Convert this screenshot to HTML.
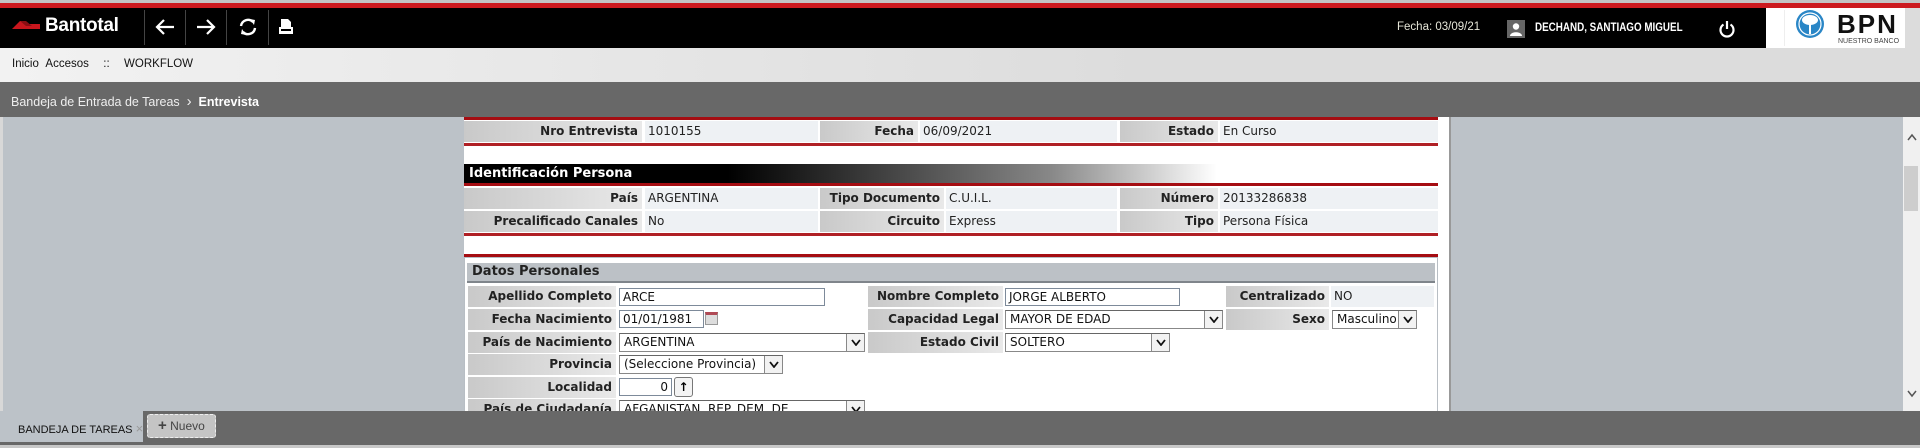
<!DOCTYPE html>
<html><head><meta charset="utf-8"><style>
*{margin:0;padding:0;box-sizing:border-box}
body{width:1920px;height:448px;position:relative;overflow:hidden;background:#bcc2c8;font-family:"Liberation Sans",sans-serif}
.a{position:absolute}
.lb{position:absolute;background:linear-gradient(90deg,#c9c9c9,#e9e9e9);font:bold 12px "DejaVu Sans",sans-serif;color:#222;text-align:right;padding-right:4px;line-height:21px;white-space:nowrap}
.vl{position:absolute;background:#eef1f4;font:12px "DejaVu Sans",sans-serif;color:#222;padding-left:3px;line-height:21px;white-space:nowrap}
.rl{position:absolute;left:464px;width:974px;background:#a50d12}
.in{position:absolute;background:#fff;border:1px solid #7d8a9a;font:12px "DejaVu Sans",sans-serif;color:#111;padding-left:3px;line-height:16px;height:18px;white-space:nowrap;overflow:hidden}
.sel{position:absolute;background:#fff;border:1px solid #888;border-top-color:#666;font:12px "DejaVu Sans",sans-serif;color:#111;padding-left:4px;line-height:17px;height:19px;white-space:nowrap;overflow:hidden}
.sel b{position:absolute;right:0;top:0;width:18px;height:17px;border-left:1px solid #888;background:#f2f2f2}
.sel b svg{position:absolute;left:4px;top:5px}
.sep{position:absolute;top:10px;width:1px;height:35px;background:#444}
</style></head><body>
<div class="a" style="left:0;top:0;width:1920px;height:3px;background:#c4c4c4"></div>
<div class="a" style="left:0;top:3px;width:1920px;height:5px;background:#cc1a1f"></div>
<div class="a" style="left:0;top:8px;width:1766px;height:40px;background:#000"></div>
<svg class="a" style="left:12px;top:19px" width="30" height="11"><polygon points="0,10 8,2 14,2 14,5 28,5 28,10" fill="#c8161d"/><polygon points="8,2 14,2 20,7 14,7" fill="#8a0d12"/></svg>
<div class="a" style="left:45px;top:15px;color:#fff;font:bold 19px 'Liberation Sans',sans-serif;letter-spacing:-0.3px">Bantotal</div>
<div class="sep" style="left:144px"></div><div class="sep" style="left:185px"></div><div class="sep" style="left:226px"></div><div class="sep" style="left:268px"></div>
<svg class="a" style="left:154px;top:18px" width="22" height="18"><path d="M20 9H3M10 2L3 9l7 7" stroke="#fff" stroke-width="2.2" fill="none"/></svg>
<svg class="a" style="left:195px;top:18px" width="22" height="18"><path d="M2 9h17M12 2l7 7-7 7" stroke="#fff" stroke-width="2.2" fill="none"/></svg>
<svg class="a" style="left:238px;top:18px" width="20" height="18"><path d="M3 8a7 7 0 0 1 12-4M17 10a7 7 0 0 1-12 4" stroke="#fff" stroke-width="2.4" fill="none"/><path d="M12 1l5 1-1 5zM8 17l-5-1 1-5z" fill="#fff"/></svg>
<svg class="a" style="left:278px;top:18px" width="16" height="17"><path d="M3 1h7l3 3v6H3z" fill="#fff"/><rect x="1" y="9" width="14" height="7" fill="#fff"/><rect x="3" y="11" width="10" height="2" fill="#000"/></svg>
<div class="a" style="left:1397px;top:21px;color:#e6e6d8;font:11.5px 'Liberation Sans',sans-serif">Fecha: 03/09/21</div>
<div class="a" style="left:1507px;top:20px;width:18px;height:18px;background:#666"><svg width="18" height="18"><circle cx="9" cy="6.5" r="3.2" fill="#fff"/><path d="M3 16c0-5 12-5 12 0z" fill="#fff"/></svg></div>
<div class="a" style="left:1535px;top:20px;color:#fff;font:bold 12px 'Liberation Sans',sans-serif;transform:scaleX(0.82);transform-origin:left">DECHAND, SANTIAGO MIGUEL</div>
<svg class="a" style="left:1718px;top:20px" width="18" height="18"><path d="M5.5 4.5a6.5 6.5 0 1 0 7 0" stroke="#fff" stroke-width="2.2" fill="none"/><path d="M9 1v8" stroke="#fff" stroke-width="2.2"/></svg>
<div class="a" style="left:1766px;top:8px;width:139px;height:40px;background:#fff"></div>
<div class="a" style="left:1784px;top:10px;width:1px;height:36px;background:#eee"></div>
<svg class="a" style="left:1792px;top:10px" width="38" height="30"><circle cx="18" cy="14" r="14" fill="#2a86c6"/><circle cx="18" cy="14" r="11" fill="none" stroke="#fff" stroke-width="1.2"/><ellipse cx="18" cy="10" rx="8" ry="5" fill="#fff"/><rect x="17" y="12" width="2" height="12" fill="#fff"/></svg>
<div class="a" style="left:1837px;top:9px;color:#111;font:bold 26px 'Liberation Sans',sans-serif;letter-spacing:2px">BPN</div>
<div class="a" style="left:1838px;top:38px;color:#444;font:7px 'Liberation Sans',sans-serif">NUESTRO BANCO</div>
<div class="a" style="left:1905px;top:8px;width:15px;height:40px;background:#dcdcdc"></div>
<div class="a" style="left:0;top:48px;width:1920px;height:34px;background:linear-gradient(90deg,#f2f2f2,#dcdcdc 60%)"></div>
<div class="a" style="left:12px;top:58px;color:#111;font:11.5px 'Liberation Sans',sans-serif;word-spacing:4px">Inicio Accesos &nbsp;:: &nbsp;WORKFLOW</div>
<div class="a" style="left:0;top:82px;width:1920px;height:35px;background:#686868"></div>
<div class="a" style="left:11px;top:93px;color:#eee;font:12.5px 'Liberation Sans',sans-serif">Bandeja de Entrada de Tareas &nbsp;<span style="font-size:15px">›</span>&nbsp; <b style="color:#fff">Entrevista</b></div>
<div class="a" style="left:0;top:117px;width:3px;height:295px;background:#d8d8d8"></div>
<div class="a" style="left:464px;top:117px;width:985px;height:294px;background:#fff"></div>
<div class="a" style="left:1449px;top:117px;width:2px;height:294px;background:#999"></div>
<div class="a" style="left:1903px;top:117px;width:17px;height:294px;background:#f0f0f0"></div>
<div class="a" style="left:1904px;top:166px;width:14px;height:45px;background:#cdcdcd"></div>
<svg class="a" style="left:1906px;top:132px" width="12" height="10"><path d="M2 8l4-5 4 5" stroke="#555" stroke-width="1.5" fill="none"/></svg>
<svg class="a" style="left:1906px;top:389px" width="12" height="10"><path d="M2 2l4 5 4-5" stroke="#555" stroke-width="1.5" fill="none"/></svg>

<div class="rl" style="top:117px;height:3px"></div>
<div class="lb" style="left:464px;top:121px;width:178px">Nro Entrevista</div><div class="vl" style="left:645px;top:121px;width:173px">1010155</div>
<div class="lb" style="left:820px;top:121px;width:98px">Fecha</div><div class="vl" style="left:920px;top:121px;width:197px">06/09/2021</div>
<div class="lb" style="left:1120px;top:121px;width:98px">Estado</div><div class="vl" style="left:1220px;top:121px;width:218px">En Curso</div>
<div class="rl" style="top:143px;height:3px;background:#b02025"></div>

<div class="a" style="left:464px;top:164px;width:753px;height:19px;background:linear-gradient(90deg,#000 35%,#888 78%,#fff);color:#fff;font:bold 13px 'DejaVu Sans',sans-serif;line-height:19px;padding-left:5px">Identificación Persona</div>
<div class="rl" style="top:183px;height:3px"></div>
<div class="lb" style="left:464px;top:188px;width:178px">País</div><div class="vl" style="left:645px;top:188px;width:173px">ARGENTINA</div>
<div class="lb" style="left:820px;top:188px;width:124px">Tipo Documento</div><div class="vl" style="left:946px;top:188px;width:171px">C.U.I.L.</div>
<div class="lb" style="left:1120px;top:188px;width:98px">Número</div><div class="vl" style="left:1220px;top:188px;width:218px">20133286838</div>
<div class="lb" style="left:464px;top:211px;width:178px">Precalificado Canales</div><div class="vl" style="left:645px;top:211px;width:173px">No</div>
<div class="lb" style="left:820px;top:211px;width:124px">Circuito</div><div class="vl" style="left:946px;top:211px;width:171px">Express</div>
<div class="lb" style="left:1120px;top:211px;width:98px">Tipo</div><div class="vl" style="left:1220px;top:211px;width:218px">Persona Física</div>
<div class="rl" style="top:233px;height:3px;background:#b02025"></div>

<div class="rl" style="top:254px;height:3px"></div>
<div class="a" style="left:464px;top:257px;width:974px;height:154px;border:1px solid #b8bec4;border-bottom:none"></div>
<div class="a" style="left:467px;top:263px;width:968px;height:20px;background:#bcc1c6;border-bottom:2px solid #7f858b;font:bold 13px 'DejaVu Sans',sans-serif;color:#222;line-height:18px;padding-left:5px">Datos Personales</div>

<div class="lb" style="left:468px;top:286px;width:148px">Apellido Completo</div><div class="vl" style="left:618px;top:286px;width:247px"></div>
<div class="lb" style="left:868px;top:286px;width:135px">Nombre Completo</div><div class="vl" style="left:1005px;top:286px;width:218px"></div>
<div class="lb" style="left:1226px;top:286px;width:103px">Centralizado</div><div class="vl" style="left:1331px;top:286px;width:103px">NO</div>
<div class="in" style="left:619px;top:288px;width:206px">ARCE</div>
<div class="in" style="left:1005px;top:288px;width:175px">JORGE ALBERTO</div>

<div class="lb" style="left:468px;top:309px;width:148px">Fecha Nacimiento</div><div class="vl" style="left:618px;top:309px;width:247px"></div>
<div class="lb" style="left:868px;top:309px;width:135px">Capacidad Legal</div><div class="vl" style="left:1005px;top:309px;width:218px"></div>
<div class="lb" style="left:1226px;top:309px;width:103px">Sexo</div><div class="vl" style="left:1331px;top:309px;width:103px"></div>
<div class="in" style="left:619px;top:310px;width:85px">01/01/1981</div>
<div class="a" style="left:705px;top:312px;width:13px;height:13px;background:#ddd;border:1px solid #999;border-top:3px solid #b04a55"></div>
<div class="sel" style="left:1005px;top:310px;width:218px">MAYOR DE EDAD<b><svg width="10" height="7"><path d="M1 1l4 5 4-5" stroke="#111" stroke-width="1.8" fill="none"/></svg></b></div>
<div class="sel" style="left:1332px;top:310px;width:85px">Masculino<b><svg width="10" height="7"><path d="M1 1l4 5 4-5" stroke="#111" stroke-width="1.8" fill="none"/></svg></b></div>

<div class="lb" style="left:468px;top:332px;width:148px">País de Nacimiento</div><div class="vl" style="left:618px;top:332px;width:247px"></div>
<div class="lb" style="left:868px;top:332px;width:135px">Estado Civil</div><div class="vl" style="left:1005px;top:332px;width:218px"></div>
<div class="lb" style="left:1226px;top:332px;width:103px"></div><div class="vl" style="left:1331px;top:332px;width:103px"></div>
<div class="sel" style="left:619px;top:333px;width:246px">ARGENTINA<b><svg width="10" height="7"><path d="M1 1l4 5 4-5" stroke="#111" stroke-width="1.8" fill="none"/></svg></b></div>
<div class="sel" style="left:1005px;top:333px;width:165px">SOLTERO<b><svg width="10" height="7"><path d="M1 1l4 5 4-5" stroke="#111" stroke-width="1.8" fill="none"/></svg></b></div>

<div class="lb" style="left:468px;top:354px;width:148px">Provincia</div><div class="vl" style="left:618px;top:354px;width:816px"></div>
<div class="sel" style="left:619px;top:355px;width:164px">(Seleccione Provincia)<b><svg width="10" height="7"><path d="M1 1l4 5 4-5" stroke="#111" stroke-width="1.8" fill="none"/></svg></b></div>
<div class="lb" style="left:468px;top:377px;width:148px">Localidad</div><div class="vl" style="left:618px;top:377px;width:816px"></div>
<div class="in" style="left:619px;top:378px;width:53px;text-align:right;padding-right:3px">0</div>
<div class="a" style="left:674px;top:377px;width:19px;height:20px;border:1px solid #777;border-radius:3px;background:#f4f4f4;font:bold 12px 'DejaVu Sans';text-align:center;line-height:18px">↑</div>

<div class="lb" style="left:468px;top:399px;width:148px">País de Ciudadanía</div><div class="vl" style="left:618px;top:399px;width:247px"></div>
<div class="lb" style="left:868px;top:399px;width:135px"></div><div class="vl" style="left:1005px;top:399px;width:218px"></div>
<div class="lb" style="left:1226px;top:399px;width:103px"></div><div class="vl" style="left:1331px;top:399px;width:103px"></div>
<div class="sel" style="left:619px;top:400px;width:246px">AFGANISTAN, REP. DEM. DE<b><svg width="10" height="7"><path d="M1 1l4 5 4-5" stroke="#111" stroke-width="1.8" fill="none"/></svg></b></div>

<div class="a" style="left:0;top:411px;width:1920px;height:34px;background:#686868"></div>
<div class="a" style="left:0;top:411px;width:143px;height:31px;background:#bcc2c8"></div>
<div class="a" style="left:18px;top:421px;color:#111;font:11px 'Liberation Sans',sans-serif;white-space:nowrap">BANDEJA DE TAREAS <span style="color:#999;font-size:13px">×</span></div>
<div class="a" style="left:147px;top:414px;width:69px;height:24px;background:#c4c4c4;border:1px dashed #eee;border-radius:3px;color:#444;font:12px 'Liberation Sans',sans-serif;line-height:22px;padding-left:10px"><b style="font-size:15px">+</b> Nuevo</div>
<div class="a" style="left:0;top:445px;width:1920px;height:3px;background:#c8c8c8"></div>
</body></html>
